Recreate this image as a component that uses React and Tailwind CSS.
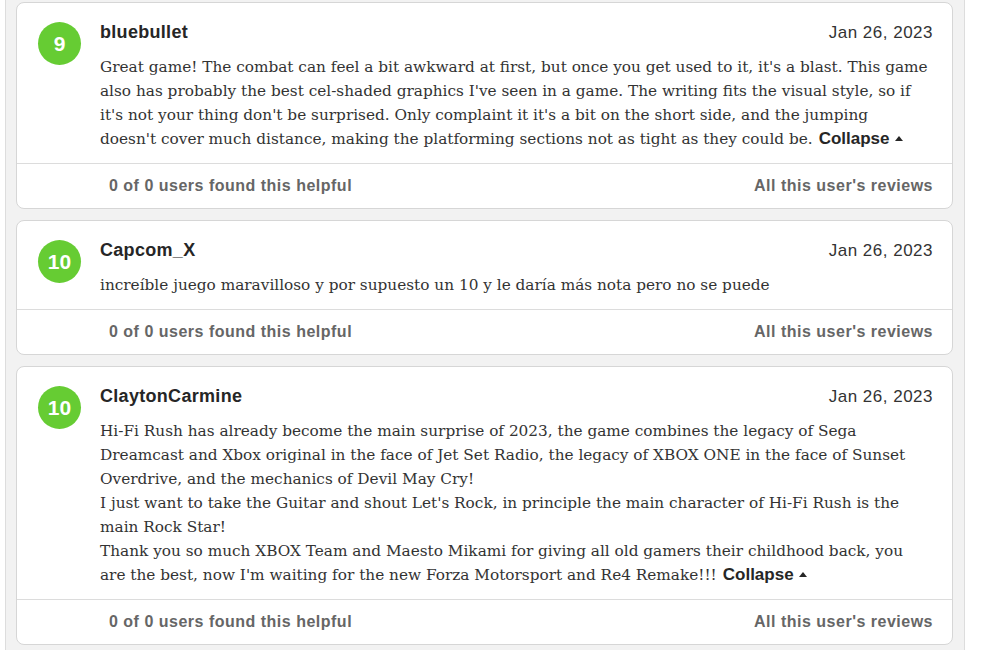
import React from "react";

const reviews = [
  {
    score: 9,
    name: "bluebullet",
    date: "Jan 26, 2023",
    lines: [
      "Great game! The combat can feel a bit awkward at first, but once you get used to it, it's a blast. This game",
      "also has probably the best cel-shaded graphics I've seen in a game. The writing fits the visual style, so if",
      "it's not your thing don't be surprised. Only complaint it it's a bit on the short side, and the jumping",
      "doesn't cover much distance, making the platforming sections not as tight as they could be.",
    ],
    collapse: true,
  },
  {
    score: 10,
    name: "Capcom_X",
    date: "Jan 26, 2023",
    lines: ["increíble juego maravilloso y por supuesto un 10 y le daría más nota pero no se puede"],
    collapse: false,
  },
  {
    score: 10,
    name: "ClaytonCarmine",
    date: "Jan 26, 2023",
    lines: [
      "Hi-Fi Rush has already become the main surprise of 2023, the game combines the legacy of Sega",
      "Dreamcast and Xbox original in the face of Jet Set Radio, the legacy of XBOX ONE in the face of Sunset",
      "Overdrive, and the mechanics of Devil May Cry!",
      "I just want to take the Guitar and shout Let's Rock, in principle the main character of Hi-Fi Rush is the",
      "main Rock Star!",
      "Thank you so much XBOX Team and Maesto Mikami for giving all old gamers their childhood back, you",
      "are the best, now I'm waiting for the new Forza Motorsport and Re4 Remake!!!",
    ],
    collapse: true,
  },
];

const sans = { fontFamily: '"Liberation Sans", Arial, sans-serif' };

function ReviewCard({ review }) {
  const last = review.lines.length - 1;
  return (
    <div className="bg-white border border-[#d6d6d6] rounded-[8px]">
      <div className="flex pl-[21px] pr-[19px] pt-[18px] pb-[12px]">
        <div
          className="w-[43px] h-[43px] mt-[1px] shrink-0 rounded-full bg-[#66cc33] flex items-center justify-center text-white font-bold text-[21px]"
          style={sans}
        >
          {review.score}
        </div>
        <div className="flex-1 ml-[19px]">
          <div className="flex items-center justify-between h-[22px]" style={sans}>
            <span className="text-[18px] font-bold text-[#262626] tracking-[0.3px]">{review.name}</span>
            <span className="text-[17px] text-[#333] tracking-[0.5px] mt-[2px]">{review.date}</span>
          </div>
          <div
            className="mt-[12px] text-[15.3px] leading-[24px] text-[#333]"
            style={{ fontFamily: '"DejaVu Serif", Georgia, serif' }}
          >
            {review.lines.map((line, i) => (
              <div key={i} className="whitespace-nowrap h-[24px]">
                {line}
                {i === last && review.collapse && (
                  <span
                    className="inline-flex items-center font-bold text-[17px] leading-none text-[#262626] ml-[6px]"
                    style={sans}
                  >
                    Collapse
                    <span className="ml-[5px] w-0 h-0 border-x-[4px] border-x-transparent border-b-[5px] border-b-[#262626]" />
                  </span>
                )}
              </div>
            ))}
          </div>
        </div>
      </div>
      <div
        className="border-t border-[#dcdcdc] h-[45px] flex items-center justify-between pl-[92px] pr-[19px] text-[16px] font-bold text-[#666] tracking-[0.5px]"
        style={sans}
      >
        <span>0 of 0 users found this helpful</span>
        <span>All this user's reviews</span>
      </div>
    </div>
  );
}

export default function App() {
  return (
    <div className="w-[992px] h-[650px] bg-white overflow-hidden">
      <div className="ml-[5px] w-[960px] h-full border-x border-[#dddddd] bg-[#f2f2f2] pl-[10px] pr-[11px] pt-[2px] flex flex-col gap-[11px]">
        {reviews.map((r) => (
          <ReviewCard key={r.name} review={r} />
        ))}
      </div>
    </div>
  );
}
